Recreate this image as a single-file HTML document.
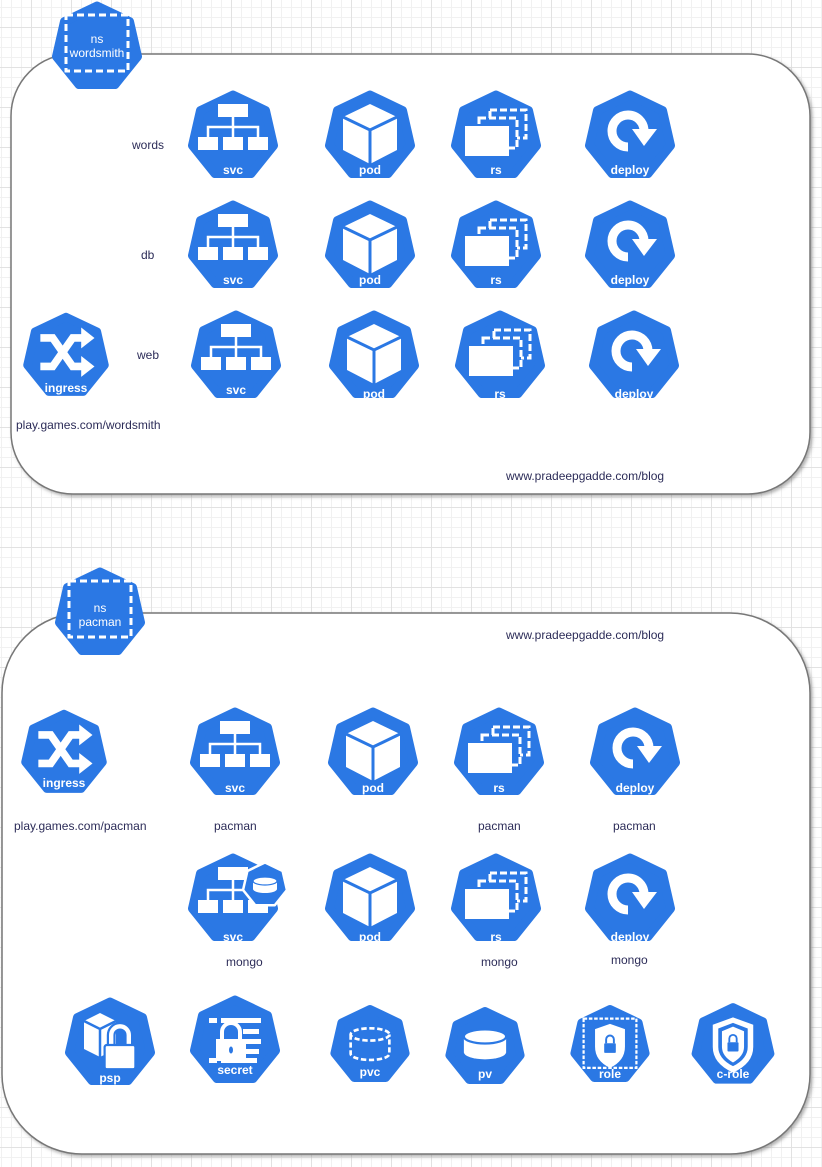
<!DOCTYPE html>
<html><head><meta charset="utf-8"><style>
html,body{margin:0;padding:0}
body{width:822px;height:1167px;overflow:hidden;background-color:#fff;
background-image:linear-gradient(#e2e2e2 1px,transparent 1px),linear-gradient(90deg,#e2e2e2 1px,transparent 1px),linear-gradient(#f1f1f1 1px,transparent 1px),linear-gradient(90deg,#f1f1f1 1px,transparent 1px);
background-size:40px 40px,40px 40px,10px 10px,10px 10px;background-position:-9px -13px}
svg{position:absolute;left:0;top:0}
text{font-family:"Liberation Sans",sans-serif}
.l{font-size:12px;fill:#2c2c58}
.w{font-size:12px;fill:#fff;font-weight:bold;text-anchor:middle}
</style></head><body>
<svg width="822" height="1167" viewBox="0 0 822 1167">
<defs>
<filter id="sh" x="-5%" y="-5%" width="110%" height="110%"><feDropShadow dx="2" dy="2" stdDeviation="1.5" flood-color="#666" flood-opacity="0.5"/></filter>
<path id="hep" d="M0,-41 L32.5,-25.5 L40.5,9.5 L18,37.5 L-18,37.5 L-40.5,9.5 L-32.5,-25.5Z" fill="#2b78e4" stroke="#2b78e4" stroke-width="9" stroke-linejoin="round"/>
<g id="svc"><use href="#hep"/><g fill="#fff"><rect x="-15" y="-32" width="30" height="13"/><rect x="-35" y="1" width="20" height="13"/><rect x="-10" y="1" width="20" height="13"/><rect x="15" y="1" width="20" height="13"/></g><path d="M0,-19V-9M-25,1V-9H25V1M0,-9V1" stroke="#fff" stroke-width="2.5" fill="none"/></g>
<g id="pod"><use href="#hep"/><path d="M0,-32L27,-19L27,14L0,28L-27,14L-27,-19Z" fill="#fff"/><path d="M-27,-19L0,-6L27,-19M0,-6V28" stroke="#2b78e4" stroke-width="3" fill="none"/></g>
<g id="rs"><use href="#hep"/><rect x="-6" y="-26" width="36" height="28" fill="none" stroke="#fff" stroke-width="3" stroke-dasharray="7 3"/><rect x="-17" y="-18" width="38" height="30" fill="#2b78e4" stroke="#fff" stroke-width="3" stroke-dasharray="7 3"/><rect x="-31" y="-10" width="44" height="30" fill="#fff"/></g>
<g id="deploy"><use href="#hep"/><path d="M-2,11 A16,16 0 1 1 14,-5" stroke="#fff" stroke-width="9" fill="none"/><polygon points="2,-7 27,-7 14,10" fill="#fff"/></g>
<g id="ingress"><use href="#hep"/><path d="M-27,-19H-14L7,11H18M-27,11H-14L7,-19H18" stroke="#fff" stroke-width="8" fill="none"/><polygon points="16,-30 30,-19 16,-8" fill="#fff"/><polygon points="16,0 30,11 16,22" fill="#fff"/></g>
<g id="ns"><use href="#hep"/><rect x="-31" y="-32" width="62" height="56" fill="none" stroke="#fff" stroke-width="3" stroke-dasharray="7 4"/></g>
<g id="cyl"><ellipse cx="0" cy="8" rx="24" ry="8" fill="#fff"/><rect x="-24" y="-8" width="48" height="16" fill="#fff"/><ellipse cx="0" cy="-8" rx="24" ry="8" fill="#fff" stroke="#2b78e4" stroke-width="2.5"/></g>
</defs>

<!-- panel 1 -->
<rect x="11" y="54" width="799" height="440" rx="62" fill="#fff" stroke="#777" stroke-width="1.5" filter="url(#sh)"/>
<g transform="translate(97,47)"><use href="#ns"/></g>
<text class="w" x="97" y="43" style="font-weight:normal">ns</text>
<text class="w" x="97" y="57" style="font-weight:normal">wordsmith</text>

<text class="l" x="132" y="149">words</text>
<text class="l" x="141" y="259">db</text>
<text class="l" x="137" y="359">web</text>

<g transform="translate(233,136)"><use href="#svc"/></g><text class="w" x="233" y="174">svc</text>
<g transform="translate(370,136)"><use href="#pod"/></g><text class="w" x="370" y="174">pod</text>
<g transform="translate(496,136)"><use href="#rs"/></g><text class="w" x="496" y="174">rs</text>
<g transform="translate(630,136)"><use href="#deploy"/></g><text class="w" x="630" y="174">deploy</text>

<g transform="translate(233,246)"><use href="#svc"/></g><text class="w" x="233" y="284">svc</text>
<g transform="translate(370,246)"><use href="#pod"/></g><text class="w" x="370" y="284">pod</text>
<g transform="translate(496,246)"><use href="#rs"/></g><text class="w" x="496" y="284">rs</text>
<g transform="translate(630,246)"><use href="#deploy"/></g><text class="w" x="630" y="284">deploy</text>

<g transform="translate(66,356) scale(0.95)"><use href="#ingress"/></g><text class="w" x="66" y="392">ingress</text>
<g transform="translate(236,356)"><use href="#svc"/></g><text class="w" x="236" y="394">svc</text>
<g transform="translate(374,356)"><use href="#pod"/></g><text class="w" x="374" y="398">pod</text>
<g transform="translate(500,356)"><use href="#rs"/></g><text class="w" x="500" y="398">rs</text>
<g transform="translate(634,356)"><use href="#deploy"/></g><text class="w" x="634" y="398">deploy</text>

<text class="l" x="16" y="429">play.games.com/wordsmith</text>
<text class="l" x="506" y="480">www.pradeepgadde.com/blog</text>

<!-- panel 2 -->
<rect x="2" y="613" width="808" height="541" rx="80" fill="#fff" stroke="#777" stroke-width="1.5" filter="url(#sh)"/>
<g transform="translate(100,613)"><use href="#ns"/></g>
<text class="w" x="100" y="612" style="font-weight:normal">ns</text>
<text class="w" x="100" y="626" style="font-weight:normal">pacman</text>
<text class="l" x="506" y="639">www.pradeepgadde.com/blog</text>

<g transform="translate(64,753) scale(0.95)"><use href="#ingress"/></g><text class="w" x="64" y="787">ingress</text>
<g transform="translate(235,753)"><use href="#svc"/></g><text class="w" x="235" y="792">svc</text>
<g transform="translate(373,753)"><use href="#pod"/></g><text class="w" x="373" y="792">pod</text>
<g transform="translate(499,753)"><use href="#rs"/></g><text class="w" x="499" y="792">rs</text>
<g transform="translate(635,753)"><use href="#deploy"/></g><text class="w" x="635" y="792">deploy</text>
<text class="l" x="14" y="830">play.games.com/pacman</text>
<text class="l" x="214" y="830">pacman</text>
<text class="l" x="478" y="830">pacman</text>
<text class="l" x="613" y="830">pacman</text>

<g transform="translate(233,899)"><use href="#svc"/></g><text class="w" x="233" y="941">svc</text>
<g transform="translate(265,885) scale(0.5)"><path d="M0,-45 L35.2,-28.1 L43.9,10 L19.5,40.5 L-19.5,40.5 L-43.9,10 L-35.2,-28.1Z" fill="#2b78e4" stroke="#fff" stroke-width="5" stroke-linejoin="round"/><use href="#cyl"/></g>
<g transform="translate(370,899)"><use href="#pod"/></g><text class="w" x="370" y="941">pod</text>
<g transform="translate(496,899)"><use href="#rs"/></g><text class="w" x="496" y="941">rs</text>
<g transform="translate(630,899)"><use href="#deploy"/></g><text class="w" x="630" y="941">deploy</text>
<text class="l" x="226" y="966">mongo</text>
<text class="l" x="481" y="966">mongo</text>
<text class="l" x="611" y="964">mongo</text>

<!-- bottom row -->
<g transform="translate(110,1043)"><use href="#hep"/><path d="M-26,-22L-10,-30L6,-22V6L-10,14L-26,6Z" fill="#fff"/><path d="M-26,-22L-10,-14L6,-22M-10,-14V14" stroke="#2b78e4" stroke-width="2.5" fill="none"/><g transform="translate(10,2) scale(1.1)"><path d="M-8,0V-9A8,8 0 0 1 8,-9V0" stroke="#2b78e4" stroke-width="8" fill="none"/><path d="M-8,0V-9A8,8 0 0 1 8,-9V0" stroke="#fff" stroke-width="4" fill="none"/><rect x="-14" y="0" width="28" height="22" rx="2" fill="#fff" stroke="#2b78e4" stroke-width="2"/></g></g>
<text class="w" x="110" y="1082">psp</text>
<g transform="translate(235,1041)"><use href="#hep"/><g fill="#fff"><rect x="-26" y="-23" width="8" height="5"/><rect x="-14" y="-23" width="40" height="5"/><rect x="8" y="-12" width="16" height="5"/><rect x="8" y="-2" width="18" height="5"/><rect x="8" y="8" width="16" height="5"/><rect x="-26" y="17" width="8" height="5"/><rect x="-14" y="17" width="36" height="5"/></g><g transform="translate(-4,-2)"><path d="M-9,0V-7A9,9 0 0 1 9,-7V0" stroke="#fff" stroke-width="4" fill="none"/><rect x="-15" y="0" width="30" height="22" fill="#fff"/><ellipse cx="0" cy="11" rx="2" ry="3.5" fill="#2b78e4"/></g></g>
<text class="w" x="235" y="1074">secret</text>
<g transform="translate(370,1045) scale(0.88)"><use href="#hep"/><ellipse cx="0" cy="-12" rx="22" ry="7" fill="none" stroke="#fff" stroke-width="3" stroke-dasharray="6 3"/><path d="M-22,-12V10A22,7 0 0 0 22,10V-12" fill="none" stroke="#fff" stroke-width="3" stroke-dasharray="6 3"/></g>
<text class="w" x="370" y="1076">pvc</text>
<g transform="translate(485,1047) scale(0.88)"><use href="#hep"/><ellipse cx="0" cy="6" rx="24" ry="8" fill="#fff"/><rect x="-24" y="-12" width="48" height="18" fill="#fff"/><ellipse cx="0" cy="-12" rx="24" ry="8" fill="#fff" stroke="#2b78e4" stroke-width="2.5"/></g>
<text class="w" x="485" y="1078">pv</text>
<g transform="translate(610,1045) scale(0.88)"><use href="#hep"/><rect x="-30" y="-30" width="60" height="56" fill="none" stroke="#fff" stroke-width="2.5" stroke-dasharray="4 2"/><path d="M0,-24L17,-18V2Q17,18 0,26Q-17,18 -17,2V-18Z" fill="#fff"/><g transform="translate(0,-2) scale(0.55)"><path d="M-8,0V-8A8,8 0 0 1 8,-8V0" stroke="#2b78e4" stroke-width="4" fill="none"/><rect x="-12" y="0" width="24" height="20" rx="2" fill="#2b78e4"/></g></g>
<text class="w" x="610" y="1078">role</text>
<g transform="translate(733,1045) scale(0.92)"><use href="#hep"/><path d="M0,-30L22,-22V2Q22,20 0,30Q-22,20 -22,2V-22Z" fill="#fff"/><path d="M0,-24L16,-18V2Q16,15 0,23Q-16,15 -16,2V-18Z" fill="#2b78e4"/><path d="M0,-20L12,-15V2Q12,12 0,19Q-12,12 -12,2V-15Z" fill="#fff"/><g transform="translate(0,-3) scale(0.5)"><path d="M-8,0V-8A8,8 0 0 1 8,-8V0" stroke="#2b78e4" stroke-width="4" fill="none"/><rect x="-12" y="0" width="24" height="20" rx="2" fill="#2b78e4"/></g></g>
<text class="w" x="733" y="1078">c-role</text>
</svg>
</body></html>
